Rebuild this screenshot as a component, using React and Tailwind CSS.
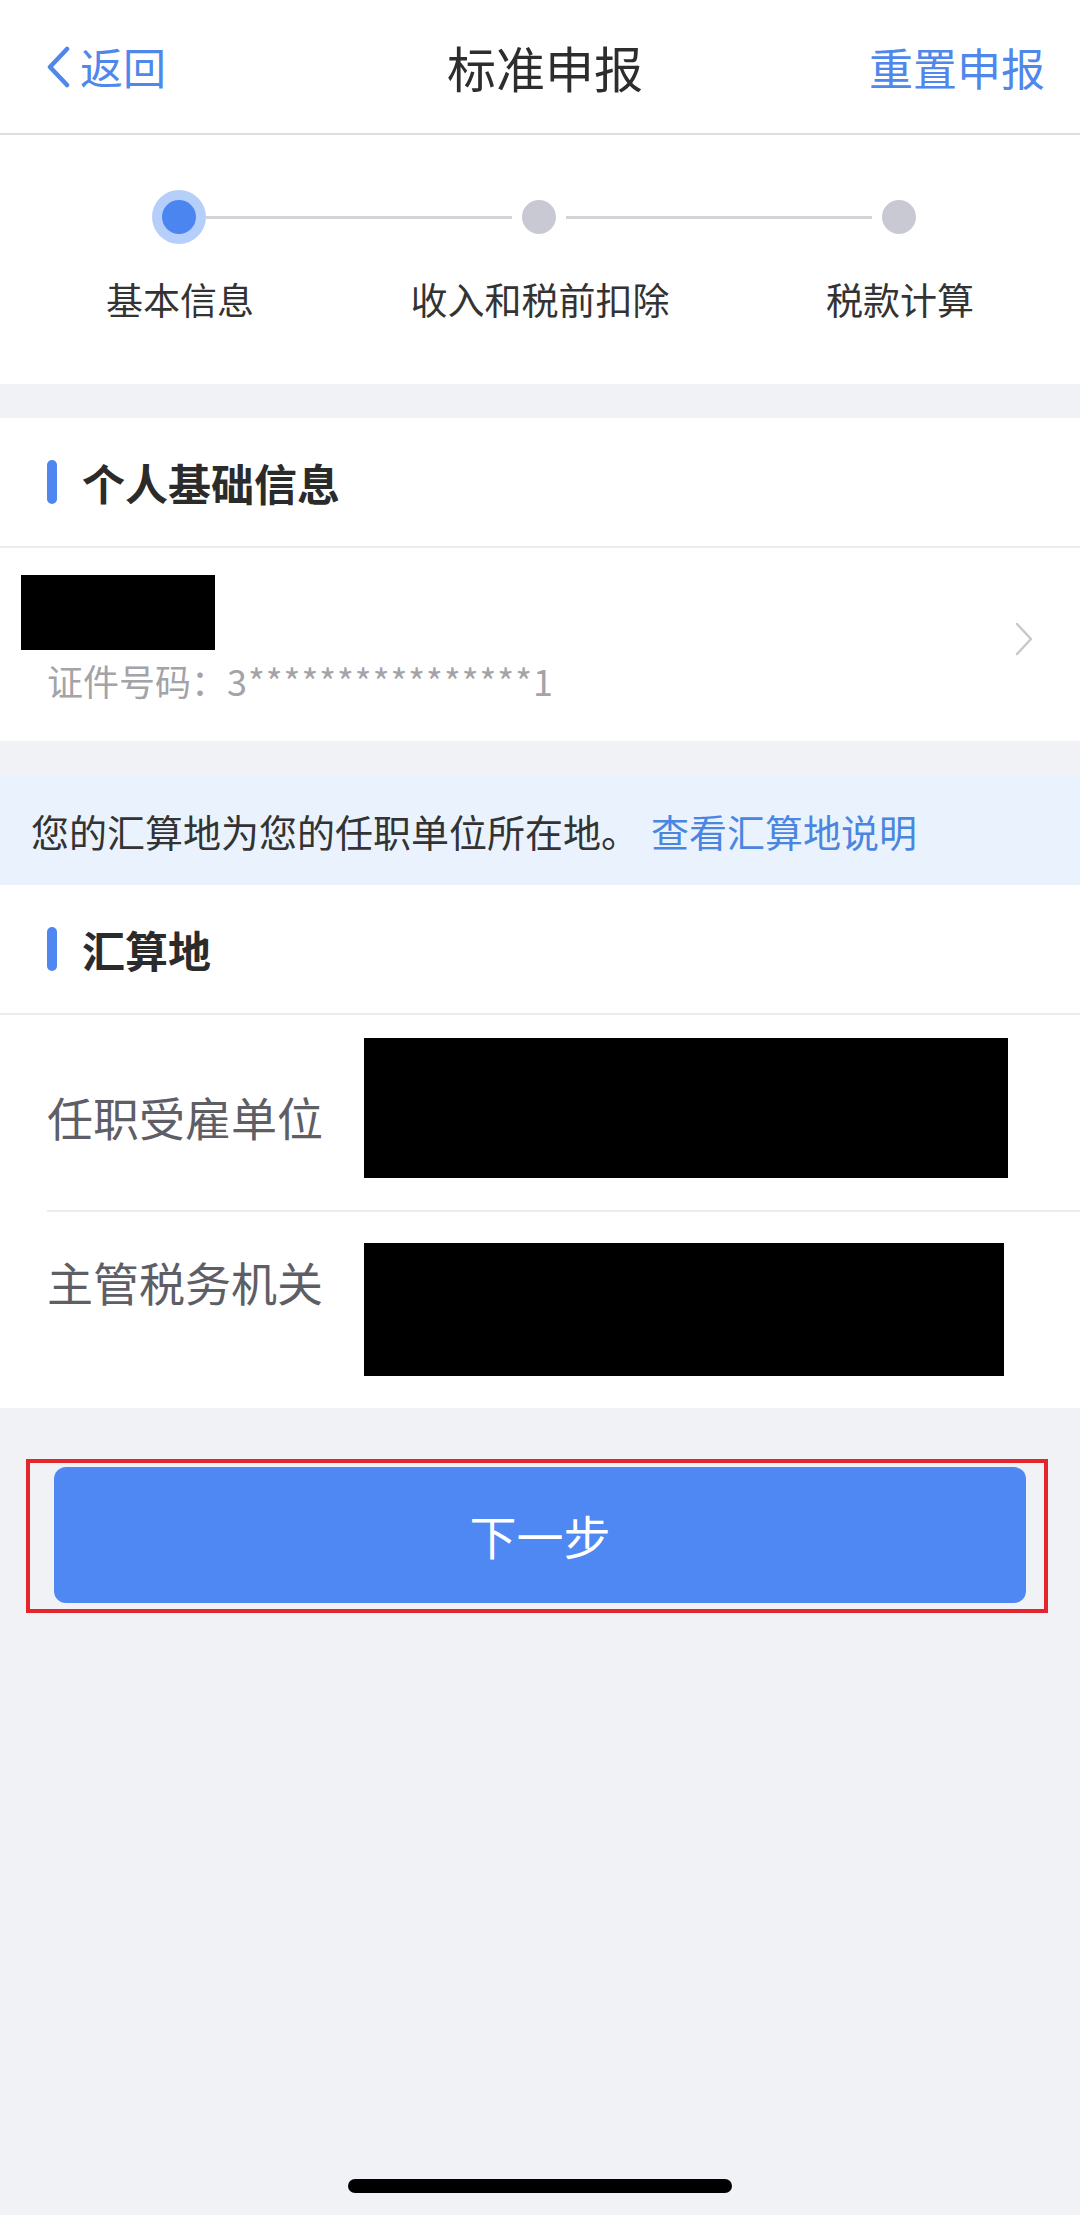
import React from 'react';

const font = { fontFamily: '"Noto Sans CJK SC", "Noto Sans", sans-serif' };

const SectionTitle = ({ title }) => (
  <div className="flex h-[130px] items-center border-b-2 border-[#ececef] pl-[47px]">
    <span className="h-[44px] w-[10px] rounded-full bg-[#4f86ef]"></span>
    <span className="ml-[25px] text-[43px] font-bold leading-none text-[#2b2b2b]">{title}</span>
  </div>
);

const StepDot = ({ active }) => (
  <div className="flex h-[54px] w-[54px] shrink-0 items-center justify-center">
    {active ? (
      <div className="flex h-[54px] w-[54px] items-center justify-center rounded-full bg-[#b5cffa]">
        <div className="h-[34px] w-[34px] rounded-full bg-[#4a85f0]"></div>
      </div>
    ) : (
      <div className="h-[34px] w-[34px] rounded-full bg-[#c9c9d3]"></div>
    )}
  </div>
);

export default function App() {
  return (
    <div className="flex min-h-[2215px] w-[1080px] flex-col bg-[#f1f2f6]" style={font}>
      {/* nav bar */}
      <div className="flex h-[135px] items-center justify-between border-b-2 border-[#dedee2] bg-white pl-[45px] pr-[35px]">
        <div className="flex w-[260px] items-center text-[#4f87ea]">
          <svg width="26" height="42" viewBox="0 0 26 42" fill="none">
            <path d="M22 3 L5 21 L22 39" stroke="#4f87ea" strokeWidth="4.5" strokeLinecap="round" strokeLinejoin="round" />
          </svg>
          <span className="ml-[9px] text-[43px] leading-none">返回</span>
        </div>
        <div className="text-[49px] leading-none text-[#2d2d2d]">标准申报</div>
        <div className="flex w-[260px] justify-end text-[44px] leading-none text-[#4f87ea]">重置申报</div>
      </div>

      {/* steps */}
      <div className="bg-white pb-[60px] pt-[55px]">
        <div className="flex items-center pl-[152px] pr-[154px]">
          <StepDot active />
          <div className="h-[3px] flex-1 bg-[#d3d3d8]"></div>
          <StepDot />
          <div className="h-[3px] flex-1 bg-[#d3d3d8]"></div>
          <StepDot />
        </div>
        <div className="mt-[30px] grid grid-cols-3 text-center text-[37px] leading-[50px] text-[#333]">
          <span>基本信息</span>
          <span>收入和税前扣除</span>
          <span>税款计算</span>
        </div>
      </div>

      {/* personal info */}
      <div className="mt-[34px] bg-white">
        <SectionTitle title="个人基础信息" />
        <div className="flex items-center pb-[38px] pl-[21px] pr-[45px] pt-[27px]">
          <div className="flex-1">
            <div className="h-[75px] w-[194px] bg-black"></div>
            <div className="ml-[26px] mt-[7px] text-[36px] leading-[46px] text-[#a3a3a8]">
              证件号码：<span className="tracking-[1px]">3****************1</span>
            </div>
          </div>
          <svg width="22" height="36" viewBox="0 0 22 36" fill="none">
            <path d="M4 3 L18 18 L4 33" stroke="#c8c8cc" strokeWidth="2.5" strokeLinecap="round" strokeLinejoin="round" />
          </svg>
        </div>
      </div>

      {/* notice */}
      <div className="mt-[34px] flex h-[110px] items-center bg-[#eaf3fd] px-[31px] text-[38px] text-[#333]">
        <span>您的汇算地为您的任职单位所在地。</span>
        <span className="ml-[12px] text-[#4a86e0]">查看汇算地说明</span>
      </div>

      {/* settlement place */}
      <div className="bg-white">
        <SectionTitle title="汇算地" />
        <div className="pl-[47px]">
          <div className="flex border-b-2 border-[#ececef] pb-[32px] pt-[23px]">
            <div className="mt-[48px] w-[317px] text-[46px] leading-[60px] text-[#5e5e66]">任职受雇单位</div>
            <div className="h-[140px] w-[644px] bg-black"></div>
          </div>
          <div className="flex pb-[32px] pt-[31px]">
            <div className="mt-[8px] w-[317px] text-[46px] leading-[60px] text-[#5e5e66]">主管税务机关</div>
            <div className="h-[133px] w-[640px] bg-black"></div>
          </div>
        </div>
      </div>

      {/* next button */}
      <div className="ml-[26px] mt-[51px] w-[1022px] border-4 border-[#e3262e] pb-[6px] pl-[24px] pr-[18px] pt-[4px]">
        <button className="flex h-[136px] w-full items-center justify-center rounded-[12px] bg-[#4f88f2] text-[47px] text-white">
          下一步
        </button>
      </div>

      <div className="flex-1"></div>
      <div className="mb-[22px] flex justify-center">
        <div className="h-[14px] w-[384px] rounded-full bg-black"></div>
      </div>
    </div>
  );
}
